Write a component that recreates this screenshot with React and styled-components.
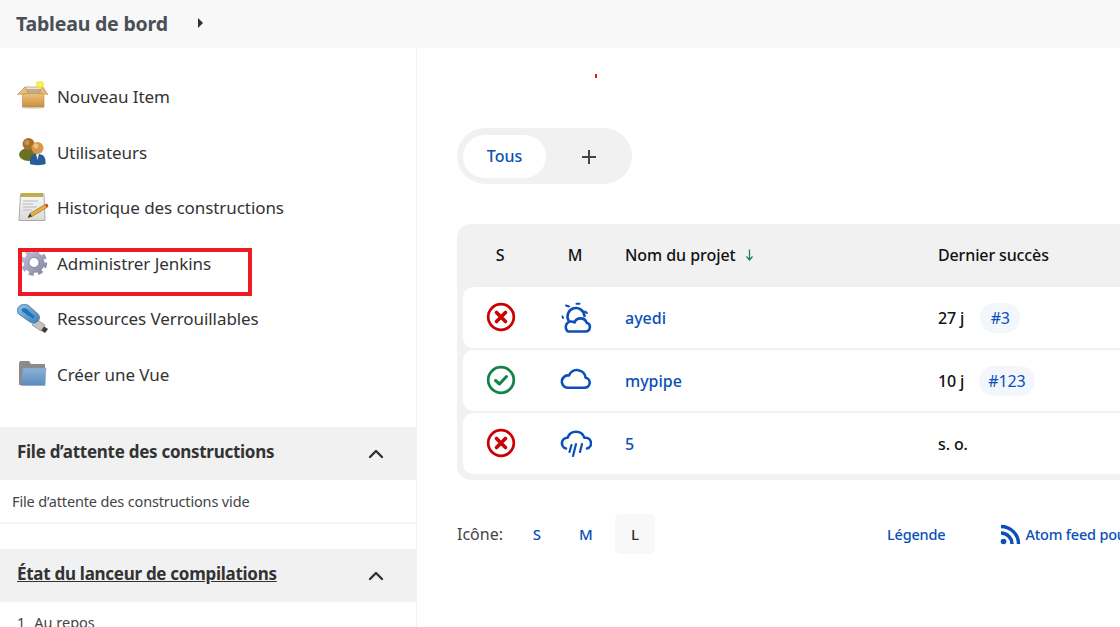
import React from 'react'
import styled, { createGlobalStyle } from 'styled-components'

const blue = '#0b4fb8'
const red = '#cc0003'
const green = '#138347'

const GlobalStyle = createGlobalStyle`
  html, body {
    margin: 0;
    height: 100%;
    overflow: hidden;
    background: #fff;
    font-family: "Noto Sans", "Open Sans", sans-serif;
    color: #333;
  }
`

const Page = styled.div`
  width: 1120px;
  height: 627px;
  display: flex;
  flex-direction: column;
  overflow: hidden;
`
const TopBar = styled.header`
  height: 48px;
  flex: none;
  background: #f8f8f8;
  display: flex;
  align-items: center;
  padding-left: 16px;
`
const Crumb = styled.a`
  margin-top: -2px;
  font-size: 19.5px;
  font-weight: 700;
  color: #4a4f57;
  letter-spacing: -0.2px;
`
const Caret = styled.span`
  width: 0;
  height: 0;
  margin-left: 30px;
  margin-top: -3px;
  border-left: 5px solid #333;
  border-top: 5px solid transparent;
  border-bottom: 5px solid transparent;
`
const Content = styled.div`
  flex: 1;
  min-height: 0;
  display: flex;
  overflow: hidden;
`
const Sidebar = styled.aside`
  width: 416px;
  flex: none;
  border-right: 1px solid #f0f0f0;
`
const Tasks = styled.nav`
  padding: 21px 0 25px;
`
const Task = styled.a`
  position: relative;
  height: 55.5px;
  display: flex;
  align-items: center;
  padding-left: 17px;
  font-size: 17px;
  letter-spacing: -0.07px;
  color: #333;
`
const TaskIcon = styled.span`
  width: 32px;
  height: 32px;
  margin-right: 8px;
  display: flex;
  svg { display: block; }
`
const Highlight = styled.span`
  position: absolute;
  left: 18px;
  top: 12px;
  width: 226px;
  height: 40px;
  border: 4px solid #ed1c24;
`
const PaneHeader = styled.div`
  height: 53px;
  background: #f1f1f1;
  display: flex;
  align-items: center;
  justify-content: space-between;
  padding: 0 31px 4px 17px;
  box-sizing: border-box;
  svg { margin-top: 5px; }
`
const PaneTitle = styled.span`
  font-size: 17px;
  font-weight: 700;
  letter-spacing: -0.28px;
  color: #333;
  text-decoration: ${p => (p.$link ? 'underline' : 'none')};
`
const PaneBody = styled.div`
  height: 44px;
  box-sizing: border-box;
  padding-left: 12px;
  display: flex;
  align-items: center;
  font-size: 14.5px;
  letter-spacing: -0.15px;
  color: #444;
  border-bottom: 2px solid #f3f3f3;
  margin-bottom: 25px;
`
const IdleRow = styled.div`
  padding: 10px 0 0 17px;
  font-size: 14.5px;
  color: #444;
  display: flex;
  gap: 9px;
`
const Main = styled.main`
  flex: 1;
  min-width: 0;
  position: relative;
  padding: 80px 0 0 40px;
`
const Tick = styled.span`
  position: absolute;
  left: 178px;
  top: 26px;
  width: 2px;
  height: 4px;
  background: #ee1122;
`
const Tabs = styled.div`
  width: 175px;
  height: 56px;
  box-sizing: border-box;
  padding: 7px 6px;
  border-radius: 28px;
  background: #f1f1f1;
  display: flex;
  align-items: center;
`
const ActiveTab = styled.a`
  width: 83px;
  height: 43px;
  border-radius: 22px;
  background: #fff;
  display: flex;
  align-items: center;
  justify-content: center;
  font-size: 16px;
  font-weight: 500;
  color: ${blue};
`
const AddTab = styled.span`
  margin: 2px 0 0 35px;
  display: flex;
`
const Table = styled.div`
  width: 800px;
  margin-top: 40px;
  padding: 0 6px 6px;
  box-sizing: border-box;
  border-radius: 14px;
  background: #f1f1f1;
  display: flex;
  flex-direction: column;
  gap: 2px;
`
const columns = '74px 76px 313px 1fr'
const HeadRow = styled.div`
  height: 61px;
  display: grid;
  grid-template-columns: ${columns};
  align-items: center;
  font-size: 16px;
  font-weight: 500;
  letter-spacing: -0.2px;
  color: #111;
`
const Row = styled.div`
  height: 61px;
  border-radius: 10px;
  background: #fff;
  display: grid;
  grid-template-columns: ${columns};
  align-items: center;
  font-size: 16px;
  font-weight: 500;
  color: #111;
`
const Centered = styled.div`
  display: flex;
  justify-content: center;
`
const IconCell = styled(Centered)`
  padding-left: 2px;
  svg { display: block; margin-top: ${p => p.$up || 0}px; }
`
const NameCell = styled.div`
  padding-left: 12px;
  display: flex;
  align-items: center;
  gap: 9px;
  letter-spacing: -0.06px;
`
const ProjectLink = styled.a`
  padding-left: 12px;
  color: ${blue};
  font-weight: 500;
`
const LastCell = styled.div`
  padding-left: 12px;
  display: flex;
  align-items: center;
  letter-spacing: -0.13px;
`
const BuildPill = styled.a`
  height: 30px;
  min-width: 40px;
  box-sizing: border-box;
  margin-left: ${p => p.$gap}px;
  padding: 0 9px;
  border-radius: 15px;
  background: #f3f6fb;
  display: flex;
  align-items: center;
  justify-content: center;
  color: ${blue};
  font-weight: 400;
`
const Footer = styled.div`
  margin-top: 34px;
  height: 40px;
  display: flex;
  align-items: center;
  white-space: nowrap;
  font-size: 16px;
  > * { flex: none; }
`
const FooterLabel = styled.span`
  width: 60px;
  color: #444;
`
const Sizes = styled.div`
  display: flex;
  gap: 9px;
`
const SizeButton = styled.a`
  width: 40px;
  height: 40px;
  border-radius: 6px;
  display: flex;
  align-items: center;
  justify-content: center;
  font-size: 15px;
  font-weight: 500;
  color: ${p => (p.$active ? '#333' : blue)};
  background: ${p => (p.$active ? '#f8f8f8' : 'transparent')};
`
const FooterLink = styled.a`
  margin-left: ${p => p.$left}px;
  display: flex;
  align-items: center;
  gap: 4px;
  color: ${blue};
  font-size: 14.5px;
  font-weight: 500;
  letter-spacing: -0.2px;
`

const BoxIcon = () => (
  <svg width="32" height="32" viewBox="0 0 32 32">
    <defs>
      <linearGradient id="boxFront" x1="0" y1="0" x2="0" y2="1">
        <stop offset="0" stopColor="#eec27a" />
        <stop offset="1" stopColor="#c98f3f" />
      </linearGradient>
      <radialGradient id="boxGlow">
        <stop offset="0" stopColor="#fff59a" />
        <stop offset="0.55" stopColor="#f5e642" />
        <stop offset="1" stopColor="#f5e642" stopOpacity="0" />
      </radialGradient>
    </defs>
    <ellipse cx="16" cy="26.500" rx="12" ry="1.500" fill="#ddd" />
    <path d="M8 6h18l4 6.500H3z" fill="#f2e3c8" stroke="#c9a064" strokeWidth="0.8" />
    <path d="M9 8h15l1 4H8z" fill="#9a8a70" opacity="0.6" />
    <path d="M5.500 12.500h21.500v13.500H5.500z" fill="url(#boxFront)" stroke="#b98a48" strokeWidth="0.6" />
    <path d="M0.500 13.500l7.500-7.500 3.500 6.500zM31 13.500l-6-7.500-2.500 6.500z" fill="#e6bd80" stroke="#b98a48" strokeWidth="0.6" />
    <circle cx="23" cy="3.500" r="5" fill="url(#boxGlow)" />
  </svg>
)

const UsersIcon = () => (
  <svg width="32" height="32" viewBox="0 0 32 32">
    <ellipse cx="11.500" cy="18.500" rx="9.500" ry="6.500" fill="#6b7024" />
    <circle cx="11.500" cy="8" r="6" fill="#a5702e" />
    <circle cx="10" cy="6.500" r="2.500" fill="#c79352" />
    <path d="M13 28c-1-8 2.500-10 7.500-10s8.500 2 8 10c-3 1.500-12.500 1.500-15.500 0z" fill="#265d96" />
    <path d="M19 18l1.500 6 1.500-6z" fill="#e9eef5" />
    <circle cx="20.500" cy="12" r="6" fill="#d9964a" />
    <circle cx="19" cy="10" r="2.500" fill="#efc07f" />
  </svg>
)

const NotesIcon = () => (
  <svg width="32" height="32" viewBox="0 0 32 32">
    <defs>
      <linearGradient id="notePage" x1="0" y1="0" x2="0" y2="1">
        <stop offset="0" stopColor="#fafafa" />
        <stop offset="1" stopColor="#d9d9d9" />
      </linearGradient>
    </defs>
    <path d="M3.500 2h23.500l1 26.500H2z" fill="url(#notePage)" stroke="#999" strokeWidth="0.8" />
    <path d="M4 1h22v4H4z" fill="#c2ab4a" />
    <path d="M6 9h15M6 12h10M6 15h14M6 18h9" stroke="#b9b9b9" strokeWidth="1" />
    <path d="M11 25.500l2-4 15-9 2 3-15 9z" fill="#e2b23c" stroke="#8b6a1e" strokeWidth="0.6" />
    <path d="M11 25.500l2-4 2 3z" fill="#333" />
    <path d="M28 12.500l2 3 1.500-1-1.500-3z" fill="#d2372a" />
  </svg>
)

const GearIcon = () => (
  <svg width="32" height="32" viewBox="0 0 32 32">
    <defs>
      <linearGradient id="gearMetal" x1="0" y1="0" x2="1" y2="1">
        <stop offset="0" stopColor="#c0c0dc" />
        <stop offset="1" stopColor="#85859f" />
      </linearGradient>
    </defs>
    <circle cx="17" cy="15.500" r="10.500" fill="url(#gearMetal)" />
    <circle cx="17" cy="15.500" r="11.500" fill="none" stroke="url(#gearMetal)" strokeWidth="3.500" strokeDasharray="5.040 4" />
    <circle cx="17" cy="15.500" r="5" fill="#fff" stroke="#77778f" strokeWidth="0.8" />
  </svg>
)

const UsbIcon = () => (
  <svg width="32" height="32" viewBox="0 0 32 32">
    <defs>
      <linearGradient id="usbBody" x1="0" y1="0" x2="1" y2="1">
        <stop offset="0" stopColor="#8cc3ea" />
        <stop offset="1" stopColor="#3b7fbb" />
      </linearGradient>
    </defs>
    <path d="M25 22l6 4-3 4-6-4z" fill="#3d3d3d" />
    <path d="M19 16l9 6-4 6-9-6z" fill="#c2c2c2" stroke="#777" strokeWidth="0.6" />
    <path d="M1 5c2-4 6-4 10-3l10 9c2 2 2 5 0 7-2 2-5 3-8 1L3 12C0 10 0 8 1 5z" fill="url(#usbBody)" stroke="#4e6f8a" strokeWidth="0.8" />
    <path d="M5 6c1-1 3-1 5 0l7 7c1 1 0 3-2 2L6 9C5 8 4 7 5 6z" fill="#1f73b8" />
  </svg>
)

const FolderIcon = () => (
  <svg width="32" height="32" viewBox="0 0 32 32">
    <defs>
      <linearGradient id="folderFront" x1="0" y1="0" x2="0" y2="1">
        <stop offset="0" stopColor="#8db2d8" />
        <stop offset="1" stopColor="#5c8bbd" />
      </linearGradient>
    </defs>
    <path d="M2 5l1-2h9l2 3h14v21H2z" fill="#8b8b8b" />
    <path d="M6 10h23l-1 17.500H4z" fill="url(#folderFront)" stroke="#7f9db9" strokeWidth="0.5" />
  </svg>
)

const Chevron = () => (
  <svg width="18" height="18" viewBox="0 0 18 18" fill="none" stroke="#333" strokeWidth="2.400" strokeLinecap="round" strokeLinejoin="round">
    <path d="M3 12l6-6 6 6" />
  </svg>
)

const Plus = () => (
  <svg width="16" height="16" viewBox="0 0 16 16" stroke="#444" strokeWidth="2">
    <path d="M8 1v14M1 8h14" />
  </svg>
)

const StatusFailed = () => (
  <svg width="30" height="30" viewBox="0 0 30 30" fill="none" stroke={red}>
    <circle cx="15" cy="15" r="12.800" strokeWidth="2.700" />
    <path d="M10.500 10.500l9 9M19.500 10.500l-9 9" strokeWidth="3.600" strokeLinecap="round" />
  </svg>
)

const StatusOk = () => (
  <svg width="30" height="30" viewBox="0 0 30 30" fill="none" stroke={green}>
    <circle cx="15" cy="15" r="12.800" strokeWidth="2.700" />
    <path d="M9.500 15.500l4 3.500 7-7.500" strokeWidth="3" strokeLinecap="round" strokeLinejoin="round" />
  </svg>
)

const weatherProps = {
  width: 32,
  height: 32,
  viewBox: '0 0 32 32',
  fill: 'none',
  stroke: blue,
  strokeWidth: 2.6,
  strokeLinecap: 'round',
  strokeLinejoin: 'round',
}

const WeatherSunny = () => (
  <svg {...weatherProps}>
    <path d="M8.500 18.500A8.500 8.500 0 1 1 24.500 14" />
    <path d="M8 29.500h17.500a4.500 4.500 0 0 0 1.200-8.800A6.500 6.500 0 0 0 14.500 20.500 4.700 4.700 0 0 0 8 29.500z" />
    <path d="M6 3.500l3 1M16.500 1.800h3M25 9.500l2 1.500M2.500 14.500l.5 1.500" strokeWidth="2" />
  </svg>
)

const WeatherCloud = () => (
  <svg {...weatherProps}>
    <path d="M7 24.700h17.700a5 5 0 0 0 1-9.900A8.700 8.700 0 0 0 9 12.500 6.100 6.100 0 0 0 7 24.700z" />
  </svg>
)

const WeatherRain = () => (
  <svg {...weatherProps}>
    <path d="M6 21.500A5.500 5.500 0 0 1 7.500 10.700 9 9 0 0 1 24.500 10.800 5.500 5.500 0 0 1 27 21.500" />
    <path d="M11.500 18l-2 7M16 17l-3 12M22 17l-2 8" strokeWidth="2.200" />
  </svg>
)

const RssIcon = () => (
  <svg width="21" height="21" viewBox="0 0 21 21" fill="none" stroke={blue} strokeWidth="3.400">
    <circle cx="3.500" cy="17.500" r="2.800" fill={blue} stroke="none" />
    <path d="M1 9a11 11 0 0 1 11 11" />
    <path d="M1 2.500A17.500 17.500 0 0 1 18.500 20" />
  </svg>
)

const SortArrow = () => (
  <svg width="9" height="12" viewBox="0 0 9 12" fill="none" stroke={green} strokeWidth="1.200">
    <path d="M4.500 0.500v10M1.500 7.500l3 3.500 3-3.500" />
  </svg>
)

const tasks = [
  { label: 'Nouveau Item', icon: <BoxIcon /> },
  { label: 'Utilisateurs', icon: <UsersIcon /> },
  { label: 'Historique des constructions', icon: <NotesIcon /> },
  { label: 'Administrer Jenkins', icon: <GearIcon />, marked: true },
  { label: 'Ressources Verrouillables', icon: <UsbIcon /> },
  { label: 'Créer une Vue', icon: <FolderIcon /> },
]

const jobs = [
  { name: 'ayedi', status: <StatusFailed />, weather: <WeatherSunny />, last: '27 j', build: '#3', gap: 16 },
  { name: 'mypipe', status: <StatusOk />, weather: <WeatherCloud />, up: 3, last: '10 j', build: '#123', gap: 15 },
  { name: '5', status: <StatusFailed />, weather: <WeatherRain />, up: 1, last: 's. o.' },
]

export default function App() {
  return (
    <Page>
      <GlobalStyle />
      <TopBar>
        <Crumb>Tableau de bord</Crumb>
        <Caret />
      </TopBar>
      <Content>
        <Sidebar>
          <Tasks>
            {tasks.map(task => (
              <Task key={task.label}>
                <TaskIcon>{task.icon}</TaskIcon>
                {task.label}
                {task.marked && <Highlight />}
              </Task>
            ))}
          </Tasks>
          <PaneHeader>
            <PaneTitle>File d’attente des constructions</PaneTitle>
            <Chevron />
          </PaneHeader>
          <PaneBody>File d’attente des constructions vide</PaneBody>
          <PaneHeader>
            <PaneTitle $link>État du lanceur de compilations</PaneTitle>
            <Chevron />
          </PaneHeader>
          <IdleRow>
            <span>1</span>
            <span>Au repos</span>
          </IdleRow>
        </Sidebar>
        <Main>
          <Tick />
          <Tabs>
            <ActiveTab>Tous</ActiveTab>
            <AddTab><Plus /></AddTab>
          </Tabs>
          <Table>
            <HeadRow>
              <Centered>S</Centered>
              <Centered>M</Centered>
              <NameCell>Nom du projet <SortArrow /></NameCell>
              <LastCell>Dernier succès</LastCell>
            </HeadRow>
            {jobs.map(job => (
              <Row key={job.name}>
                <IconCell $up={-2}>{job.status}</IconCell>
                <IconCell $up={-(job.up || 0)}>{job.weather}</IconCell>
                <ProjectLink>{job.name}</ProjectLink>
                <LastCell>
                  {job.last}
                  {job.build && <BuildPill $gap={job.gap}>{job.build}</BuildPill>}
                </LastCell>
              </Row>
            ))}
          </Table>
          <Footer>
            <FooterLabel>Icône:</FooterLabel>
            <Sizes>
              <SizeButton>S</SizeButton>
              <SizeButton>M</SizeButton>
              <SizeButton $active>L</SizeButton>
            </Sizes>
            <FooterLink $left={232}>Légende</FooterLink>
            <FooterLink $left={55}><RssIcon />Atom feed pour tous les builds</FooterLink>
          </Footer>
        </Main>
      </Content>
    </Page>
  )
}
